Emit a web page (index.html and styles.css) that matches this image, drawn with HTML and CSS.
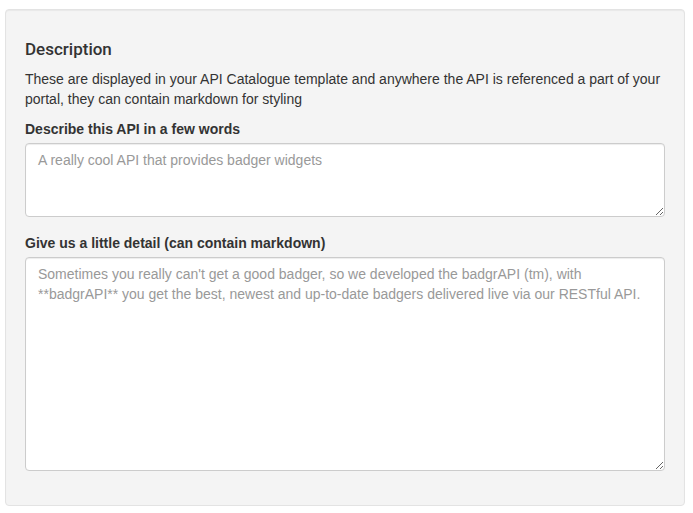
FILE: index.html
```html
<!DOCTYPE html>
<html lang="en">
<head>
<meta charset="utf-8">
<title>Description</title>
<link rel="stylesheet" href="styles.css">
</head>
<body>
<div class="well">
  <h4 class="section-title">Description</h4>
  <p class="help">These are displayed in your API Catalogue template and anywhere the API is referenced a part of your portal, they can contain markdown for styling</p>
  <div class="form-group form-group-short">
    <label class="field-label" for="short">Describe this API in a few words</label>
    <textarea id="short" class="form-control" rows="3" placeholder="A really cool API that provides badger widgets"></textarea>
  </div>
  <div class="form-group">
    <label class="field-label" for="long">Give us a little detail (can contain markdown)</label>
    <textarea id="long" class="form-control" rows="10" placeholder="Sometimes you really can't get a good badger, so we developed the badgrAPI (tm), with **badgrAPI** you get the best, newest and up-to-date badgers delivered live via our RESTful API."></textarea>
  </div>
</div>
</body>
</html>
```

FILE: styles.css
```css
* { box-sizing: border-box; }
html, body { margin: 0; padding: 0; background: #fff; }
body {
  font-family: "Liberation Sans", Arial, sans-serif;
  font-size: 14px;
  line-height: 20px;
  color: #333;
  padding: 9px 8px 8px 5px;
}
.well {
  width: 680px;
  background: #f4f4f4;
  border: 1px solid #e3e3e3;
  border-radius: 4px;
  padding: 19px;
  box-shadow: inset 0 1px 1px rgba(0,0,0,.05);
}
.section-title {
  font-family: Roboto, "Liberation Sans", sans-serif;
  font-size: 17px;
  font-weight: 500;
  line-height: 20px;
  margin: 10px 0 10px;
  color: #333;
}
.help { margin: 0 0 10px; }
.form-group { margin-bottom: 15px; }
.form-group-short { margin-bottom: 16px; }
.field-label {
  display: inline-block;
  font-weight: bold;
  margin-bottom: 4px;
}
.form-control {
  display: block;
  width: 100%;
  padding: 6px 12px;
  font-family: inherit;
  font-size: 14px;
  line-height: 20px;
  color: #555;
  background: #fff;
  border: 1px solid #ccc;
  border-radius: 4px;
  box-shadow: inset 0 1px 1px rgba(0,0,0,.075);
  resize: vertical;
  margin: 0;
}
.form-control::placeholder { color: #999; opacity: 1; }
```
